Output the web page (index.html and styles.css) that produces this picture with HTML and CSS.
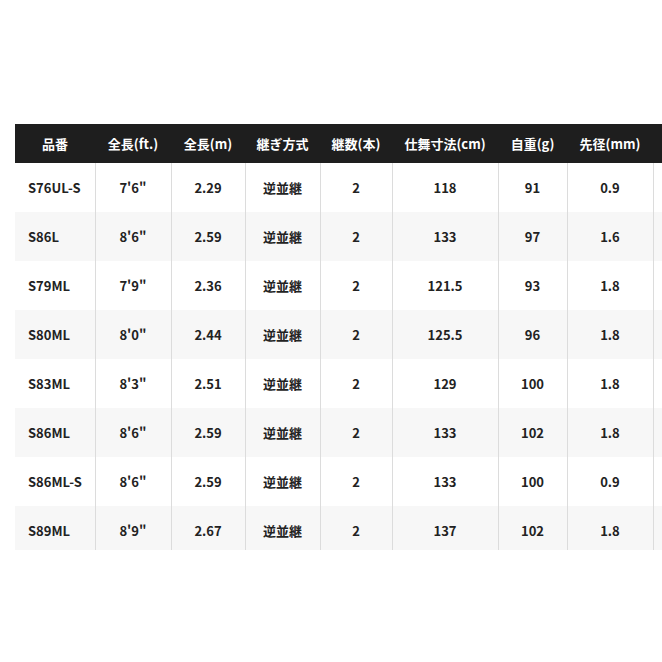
FILE: index.html
```html
<!DOCTYPE html>
<html lang="ja">
<head>
<meta charset="utf-8">
<link rel="stylesheet" href="styles.css">
</head>
<body>
<div class="wrap">
<table class="spec">
<colgroup>
<col class="c1"><col class="c2"><col class="c3"><col class="c4"><col class="c5"><col class="c6"><col class="c7"><col class="c8"><col class="c9">
</colgroup>
<thead>
<tr><th>品番</th><th>全長(ft.)</th><th>全長(m)</th><th>継ぎ方式</th><th>継数(本)</th><th>仕舞寸法(cm)</th><th>自重(g)</th><th>先径(mm)</th><th></th></tr>
</thead>
<tbody>
<tr><td>S76UL-S</td><td>7'6"</td><td>2.29</td><td>逆並継</td><td>2</td><td>118</td><td>91</td><td>0.9</td><td></td></tr>
<tr><td>S86L</td><td>8'6"</td><td>2.59</td><td>逆並継</td><td>2</td><td>133</td><td>97</td><td>1.6</td><td></td></tr>
<tr><td>S79ML</td><td>7'9"</td><td>2.36</td><td>逆並継</td><td>2</td><td>121.5</td><td>93</td><td>1.8</td><td></td></tr>
<tr><td>S80ML</td><td>8'0"</td><td>2.44</td><td>逆並継</td><td>2</td><td>125.5</td><td>96</td><td>1.8</td><td></td></tr>
<tr><td>S83ML</td><td>8'3"</td><td>2.51</td><td>逆並継</td><td>2</td><td>129</td><td>100</td><td>1.8</td><td></td></tr>
<tr><td>S86ML</td><td>8'6"</td><td>2.59</td><td>逆並継</td><td>2</td><td>133</td><td>102</td><td>1.8</td><td></td></tr>
<tr><td>S86ML-S</td><td>8'6"</td><td>2.59</td><td>逆並継</td><td>2</td><td>133</td><td>100</td><td>0.9</td><td></td></tr>
<tr><td>S89ML</td><td>8'9"</td><td>2.67</td><td>逆並継</td><td>2</td><td>137</td><td>102</td><td>1.8</td><td></td></tr>
</tbody>
</table>
</div>
</body>
</html>
```
FILE: styles.css
```css
html, body {
  margin: 0;
  padding: 0;
  background: #ffffff;
}
body {
  font-family: "Noto Sans CJK JP", "Noto Sans", sans-serif;
  overflow: hidden;
}
.wrap {
  margin: 124px 0 0 15px;
  width: 647px;
  height: 426px;
  overflow: hidden;
}
.spec {
  border-collapse: collapse;
  table-layout: fixed;
  width: 718px;
  font-size: 13px;
  font-weight: 700;
}
.c1 { width: 80px; }
.c2 { width: 76px; }
.c3 { width: 74px; }
.c4 { width: 75px; }
.c5 { width: 72px; }
.c6 { width: 106px; }
.c7 { width: 69px; }
.c8 { width: 86px; }
.c9 { width: 80px; }
.spec th {
  background: #1e1e1e;
  color: #ffffff;
  height: 39px;
  padding: 0;
  text-align: center;
  font-weight: 700;
  line-height: 1;
}
.spec td {
  height: 49px;
  padding: 0;
  text-align: center;
  color: #222222;
  border-left: 1px solid #dcdcdc;
  line-height: 1;
}
.spec td:first-child {
  border-left: none;
  text-align: left;
  padding-left: 13px;
}
.spec tbody tr:nth-child(even) td {
  background: #f7f7f7;
}
```
